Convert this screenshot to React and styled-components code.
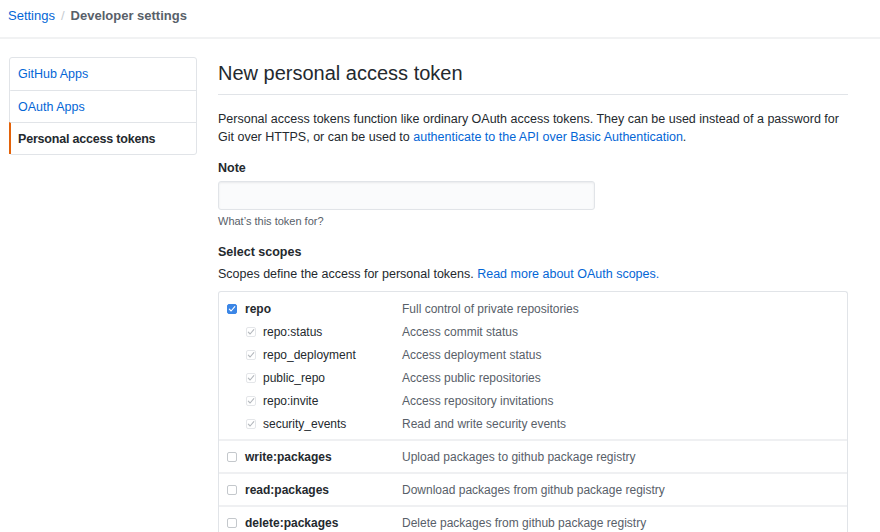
import React from "react";
import styled, { createGlobalStyle } from "styled-components";

const Global = createGlobalStyle`
  html, body { margin: 0; padding: 0; background: #fff; }
  body {
    font-family: "Liberation Sans", Arial, sans-serif;
    font-size: 12px;
    color: #24292e;
    -webkit-font-smoothing: antialiased;
  }
  * { box-sizing: border-box; }
`;

const Page = styled.div`
  width: 880px;
  height: 532px;
  overflow: hidden;
`;

const Breadcrumb = styled.div`
  height: 39px;
  border-bottom: 2px solid #f1f2f3;
  padding: 0 0 6px 8px;
  font-size: 13px;
  display: flex;
  align-items: center;
`;

const CrumbLink = styled.a`
  color: #0366d6;
  text-decoration: none;
`;

const CrumbSep = styled.span`
  color: #c6cbd1;
  margin: 0 6px;
`;

const CrumbCurrent = styled.span`
  color: #586069;
  font-weight: 600;
`;

const Body = styled.div`
  display: flex;
  gap: 21px;
  padding: 18px 0 0 9px;
`;

const SideNav = styled.nav`
  width: 188px;
  flex: none;
  border: 1px solid #e1e4e8;
  border-radius: 3px;
  align-self: flex-start;
  display: flex;
  flex-direction: column;
`;

const NavItem = styled.a`
  height: 32px;
  display: flex;
  align-items: center;
  padding-left: 7px;
  font-size: 12.5px;
  text-decoration: none;
  color: ${(p) => (p.$active ? "#24292e" : "#0366d6")};
  font-weight: ${(p) => (p.$active ? 600 : 400)};
  letter-spacing: ${(p) => (p.$active ? "-0.2px" : "0")};
  border-left: 2px solid ${(p) => (p.$active ? "#e36209" : "transparent")};
  margin-left: -1px;
  & + & { border-top: 1px solid #e1e4e8; }
`;

const Main = styled.main`
  width: 630px;
  flex: none;
`;

const Title = styled.h1`
  margin: 0;
  font-size: 20px;
  font-weight: 400;
  line-height: 32px;
  padding-bottom: 5px;
  border-bottom: 1px solid #e1e4e8;
`;

const Intro = styled.p`
  margin: 15px 0 0;
  font-size: 12.5px;
  line-height: 18px;
`;

const Link = styled.a`
  color: #0366d6;
  text-decoration: none;
`;

const Label = styled.div`
  font-weight: 700;
  font-size: 12.5px;
  line-height: 18px;
  margin-top: ${(p) => p.$mt || 0}px;
`;

const Input = styled.input`
  display: block;
  width: 377px;
  height: 29px;
  margin-top: 4px;
  background: #fafbfc;
  border: 1px solid #e1e4e8;
  border-radius: 3px;
  box-shadow: inset 0 1px 2px rgba(27, 31, 35, 0.075);
  outline: none;
`;

const Hint = styled.div`
  margin-top: 4px;
  font-size: 11px;
  color: #586069;
  line-height: 14px;
`;

const Desc = styled.p`
  margin: 4px 0 0;
  font-size: 12.5px;
  line-height: 18px;
`;

const ScopeTable = styled.div`
  margin-top: 8px;
  border: 1px solid #e1e4e8;
  border-bottom: none;
  border-radius: 3px 3px 0 0;
`;

const Group = styled.div`
  padding: ${(p) => (p.$multi ? "5px 0 4px" : "4px 0 3px")};
  & + & { border-top: 2px solid #eff0f2; }
`;

const Row = styled.div`
  display: flex;
  align-items: center;
  height: ${(p) => (p.$tall ? 24 : 23)}px;
  padding-left: ${(p) => (p.$sub ? 27 : 8)}px;
`;

const Box = styled.span`
  width: 10px;
  height: 10px;
  flex: none;
  border-radius: 2px;
  display: flex;
  align-items: center;
  justify-content: center;
  background: ${(p) => (p.$checked ? "#3b86e6" : "#fff")};
  border: 1px solid ${(p) => (p.$checked ? "#3b86e6" : p.$sub ? "#e4e6e9" : "#c4c8cc")};
`;

const Name = styled.span`
  width: ${(p) => (p.$sub ? 139 : 157)}px;
  margin-left: ${(p) => (p.$sub ? 7 : 8)}px;
  font-size: 12px;
  font-weight: ${(p) => (p.$sub ? 400 : 700)};
  flex: none;
`;

const Info = styled.span`
  font-size: 12px;
  color: #586069;
`;

const Check = ({ color }) => (
  <svg width="8" height="8" viewBox="0 0 8 8">
    <path d="M1.3 4.2 L3.1 6 L6.8 1.6" fill="none" stroke={color} strokeWidth="1.1" strokeLinecap="round" strokeLinejoin="round" />
  </svg>
);

const repoSubs = [
  ["repo:status", "Access commit status"],
  ["repo_deployment", "Access deployment status"],
  ["public_repo", "Access public repositories"],
  ["repo:invite", "Access repository invitations"],
  ["security_events", "Read and write security events"],
];

const others = [
  ["write:packages", "Upload packages to github package registry"],
  ["read:packages", "Download packages from github package registry"],
  ["delete:packages", "Delete packages from github package registry"],
];

export default function App() {
  return (
    <Page>
      <Global />
      <Breadcrumb>
        <CrumbLink href="#">Settings</CrumbLink>
        <CrumbSep>/</CrumbSep>
        <CrumbCurrent>Developer settings</CrumbCurrent>
      </Breadcrumb>
      <Body>
        <SideNav>
          <NavItem href="#">GitHub Apps</NavItem>
          <NavItem href="#">OAuth Apps</NavItem>
          <NavItem href="#" $active>Personal access tokens</NavItem>
        </SideNav>
        <Main>
          <Title>New personal access token</Title>
          <Intro>
            Personal access tokens function like ordinary OAuth access tokens. They can be used instead of a password for Git over HTTPS, or can be used to{" "}
            <Link href="#">authenticate to the API over Basic Authentication</Link>.
          </Intro>
          <Label $mt={13}>Note</Label>
          <Input />
          <Hint>What’s this token for?</Hint>
          <Label $mt={15}>Select scopes</Label>
          <Desc>
            Scopes define the access for personal tokens. <Link href="#">Read more about OAuth scopes.</Link>
          </Desc>
          <ScopeTable>
            <Group $multi>
              <Row>
                <Box $checked><Check color="#fff" /></Box>
                <Name>repo</Name>
                <Info>Full control of private repositories</Info>
              </Row>
              {repoSubs.map(([n, d]) => (
                <Row $sub key={n}>
                  <Box $sub><Check color="#b4b8bd" /></Box>
                  <Name $sub>{n}</Name>
                  <Info>{d}</Info>
                </Row>
              ))}
            </Group>
            {others.map(([n, d]) => (
              <Group key={n}>
                <Row $tall>
                  <Box />
                  <Name>{n}</Name>
                  <Info>{d}</Info>
                </Row>
              </Group>
            ))}
          </ScopeTable>
        </Main>
      </Body>
    </Page>
  );
}
